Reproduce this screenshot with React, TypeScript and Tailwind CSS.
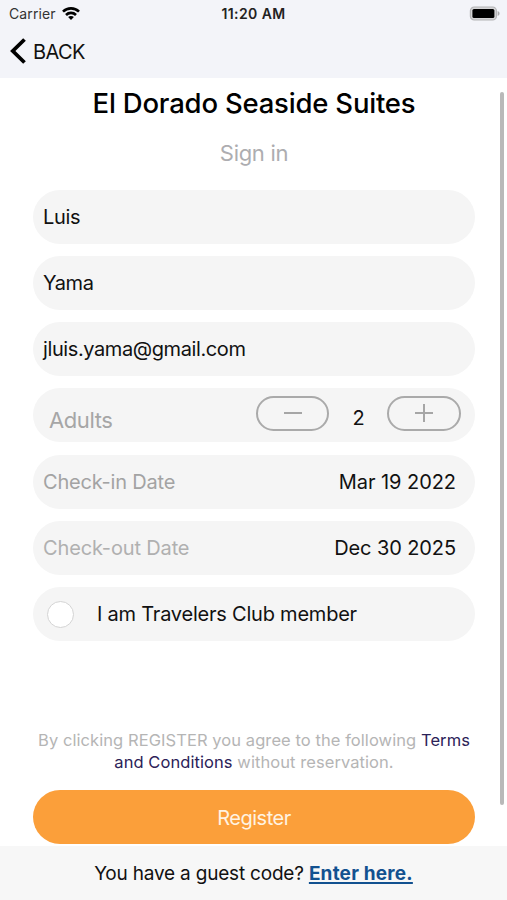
import type { ReactNode } from 'react';

function Row({ children, className = '' }: { children: ReactNode; className?: string }) {
  return (
    <div className={`flex h-[54px] w-full shrink-0 items-center rounded-full bg-[#f5f5f5] text-[20px] ${className}`}>
      {children}
    </div>
  );
}

function StatusBar() {
  return (
    <div className="grid h-[27px] grid-cols-3 items-center px-[9px]">
      <div className="flex items-center gap-[6px] text-[14px] tracking-[0.1px] text-[#333]">
        <span>Carrier</span>
        <svg width="18" height="14" viewBox="0 0 18 14" fill="none" stroke="#000" strokeWidth="2.6">
          <path d="M1 4.7C5.4.3 12.6.3 17 4.7" />
          <path d="M4 8C6.8 5.2 11.2 5.2 14 8" />
          <path d="M6.1 10.1C7.6 8.6 10.4 8.6 11.9 10.1L9 13Z" fill="#000" stroke="none" />
        </svg>
      </div>
      <div className="text-center text-[14px] font-semibold tracking-[0.4px] whitespace-nowrap text-[#222]">11:20 AM</div>
      <div className="-mt-px -mr-[2px] flex justify-end">
        <svg width="31" height="15" viewBox="0 0 31 15">
          <rect x="1.4" y="1" width="26" height="13" rx="3.8" fill="#d5d5d7" stroke="#b4b4b6" strokeWidth="1.2" />
          <rect x="3.4" y="3" width="22" height="9" rx="1.6" fill="#000" />
          <path d="M28.6 5C31.2 5.9 31.2 9.1 28.6 10Z" fill="#aaaaac" />
        </svg>
      </div>
    </div>
  );
}

export default function App() {
  return (
    <div className="relative flex h-[900px] w-[507px] flex-col overflow-hidden bg-white font-['Inter','Liberation_Sans',sans-serif] text-[#111]">
      <header className="h-[78px] shrink-0 bg-[#f3f4f9]">
        <StatusBar />
        <button className="flex h-12 items-center gap-[6px] pl-[9px]">
          <svg width="18" height="26" viewBox="0 0 18 26" fill="none" stroke="#000" strokeWidth="3.8">
            <path d="M15.5 1.5L3.8 13L15.5 24.5" />
          </svg>
          <span className="mt-[2px] text-[20px] tracking-[-0.6px]">BACK</span>
        </button>
      </header>

      <main className="flex h-[768px] shrink-0 flex-col pr-[32px] pl-[33px]">
        <h1 className="mt-[9px] h-8 text-center text-[27.5px] font-medium leading-8 tracking-[-0.2px] whitespace-nowrap text-black">El Dorado Seaside Suites</h1>
        <p className="mt-[20px] h-7 text-center text-[22px] leading-7 tracking-[-0.3px] text-[#adadb0]">Sign in</p>
        <form className="mt-[23px] flex flex-col gap-3">
          <Row className="px-[10px] tracking-[-0.3px]">Luis</Row>
          <Row className="px-[10px] tracking-[-0.4px]">Yama</Row>
          <Row className="px-[10px] tracking-[-0.4px]">jluis.yama@gmail.com</Row>
          <Row className="pr-[14px] pl-[16px]">
            <span className="mt-[10px] text-[22px] tracking-[-0.4px] text-[#a6a6a6]">Adults</span>
            <span className="-mt-[4px] ml-auto flex h-[35px] w-[73px] items-center justify-center rounded-full border-2 border-[#aaa]">
              <svg width="20" height="20" stroke="#a6a6a6" strokeWidth="2"><path d="M1 10H19" /></svg>
            </span>
            <span className="mt-[5px] w-[58px] pl-px text-center">2</span>
            <span className="-mt-[4px] flex h-[35px] w-[74px] items-center justify-center rounded-full border-2 border-[#aaa]">
              <svg width="20" height="20" stroke="#a6a6a6" strokeWidth="2"><path d="M1 10H19M10 1V19" /></svg>
            </span>
          </Row>
          <Row className="mt-px justify-between pr-[19px] pl-[10px]">
            <span className="tracking-[-0.2px] text-[#a3a3a3]">Check-in Date</span>
            <span className="tracking-[-0.05px]">Mar 19 2022</span>
          </Row>
          <Row className="justify-between pr-[19px] pl-[10px]">
            <span className="tracking-[-0.15px] text-[#b0b0b0]">Check-out Date</span>
            <span className="tracking-[-0.1px]">Dec 30 2025</span>
          </Row>
          <Row className="pl-[14px]">
            <span className="h-[27px] w-[27px] rounded-full border-[1.5px] border-[#d4d4d4] bg-white" />
            <span className="ml-[23px] tracking-[-0.22px]">I am Travelers Club member</span>
          </Row>
        </form>
        <p className="-mx-2 mt-[88px] text-center text-[16.5px] leading-[22px] tracking-[0.07px] whitespace-nowrap text-[#b5b5b5]">
          By clicking REGISTER you agree to the following <a className="text-[#2b2258]">Terms</a>
          <br />
          <a className="text-[#2b2258]">and Conditions</a> without reservation.
        </p>
        <button className="mt-[17px] h-[54px] shrink-0 rounded-full bg-[#fb9f3a] pt-px text-[20px] tracking-[-0.5px] text-[#fff3e2]">Register</button>
      </main>

      <footer className="flex h-[54px] shrink-0 items-center justify-center bg-[#f7f7f7] pt-[3px] text-[19px] whitespace-pre">
        <span className="tracking-[-0.2px]">You have a guest code? </span>
        <a className="font-bold tracking-[0.2px] text-[#125190] underline decoration-2 underline-offset-2">Enter here.</a>
      </footer>

      <div className="absolute top-[92px] right-[3px] h-[713px] w-1 rounded-full bg-[#b9b9b9]" />
    </div>
  );
}
